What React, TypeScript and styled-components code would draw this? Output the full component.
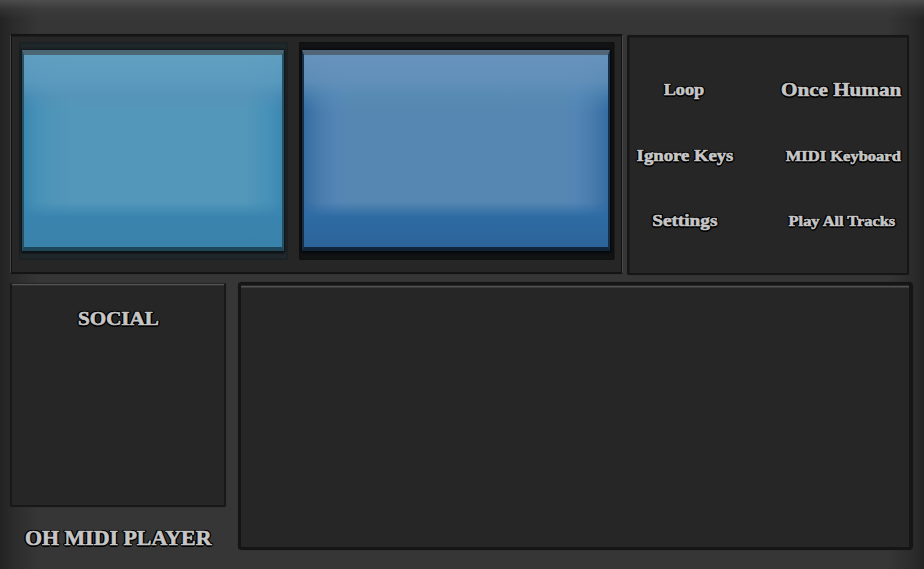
import React from "react";
import styled, { createGlobalStyle } from "styled-components";

const GlobalStyle = createGlobalStyle`
  * { box-sizing: border-box; }
  body { margin: 0; background: #353535; }
`;

const Shell = styled.main`
  width: 924px;
  height: 569px;
  padding: 34px 11px 0 10px;
  display: flex;
  flex-direction: column;
  gap: 8px;
  overflow: hidden;
  background:
    linear-gradient(180deg, rgba(82, 82, 82, 0.85) 0, rgba(64, 64, 64, 0.5) 9px, rgba(54, 54, 54, 0) 19px),
    linear-gradient(90deg, rgba(30, 30, 30, 0.8) 0, rgba(35, 35, 35, 0.6) 12px, rgba(48, 48, 48, 0) 38px),
    linear-gradient(270deg, rgba(30, 30, 30, 0.8) 0, rgba(35, 35, 35, 0.6) 10px, rgba(48, 48, 48, 0) 36px),
    #363636;
`;

const TopRow = styled.div`
  display: flex;
  height: 240px;
  gap: 4px;
`;

const BottomRow = styled.div`
  display: flex;
  height: 287px;
  gap: 12px;
`;

const ScreenPanel = styled.section`
  width: 613px;
  height: 240px;
  padding: 6px 8px 0;
  display: flex;
  gap: 11px;
  background: #262626;
  border: 2px solid #141414;
  border-left: 1px solid #464646;
  border-right: 1px solid #4b4b4b;
  border-radius: 2px;
  box-shadow: inset 1px 0 #111, inset -1px 0 #111, inset 0 1px #1c1c1c, 0 0 1px #202020;
`;

const Bezel = styled.div<{ $deep?: boolean }>`
  width: ${(p) => (p.$deep ? "315px" : "269px")};
  height: 218px;
  padding: 8px 4px 8px 3px;
  border-radius: 2px;
  background: ${(p) => (p.$deep ? "#121314" : "#20282b")};
  box-shadow: ${(p) =>
    p.$deep ? "inset 0 0 2px #0b0b0b, 1px 0 #1b1b1b" : "inset 0 0 2px 1px #1b1f20, 0 0 1px #252b2d"};
`;

const Glass = styled.div<{ $deep?: boolean }>`
  height: 201px;
  border-style: solid;
  border-width: 5px 2px 4px;
  border-color: ${(p) =>
    p.$deep ? "#526478 #152f49 #10243a #152f49" : "#4b6773 #285063 #1f4558 #285063"};
  box-shadow: 0 0 2px 1px ${(p) => (p.$deep ? "#05080b" : "#101719")}, 0 2px 2px #080c0e;
  background:
    linear-gradient(180deg,
      ${(p) => (p.$deep ? "rgba(104,148,189,.95)" : "rgba(99,160,193,.9)")} 0,
      ${(p) => (p.$deep ? "rgba(99,145,187,.85)" : "rgba(94,156,191,.8)")} 26px,
      rgba(90,145,183,0.35) 42px,
      rgba(90,145,183,0) 56px,
      rgba(57,130,175,0) 147px,
      ${(p) => (p.$deep ? "#2d6ba3" : "#3984af")} 162px,
      ${(p) => (p.$deep ? "#2c6499" : "#3982aa")} 100%),
    linear-gradient(90deg,
      ${(p) => (p.$deep ? "#356da3" : "#3c87b0")} 0,
      ${(p) => (p.$deep ? "#4a7dad 17px, #5385b6 32px, #5687b2 44px" : "#4690b7 12px, #4f95b9 28px, #5397ba 50px")},
      ${(p) => (p.$deep ? "#5687b2 calc(100% - 44px), #5385b6 calc(100% - 32px), #4a7dad calc(100% - 17px)" : "#5397ba calc(100% - 36px), #458fb7 calc(100% - 10px)")},
      ${(p) => (p.$deep ? "#356da3" : "#3c87b0")} 100%);
  background-origin: padding-box;
`;

const OptionsPanel = styled.section`
  width: 282px;
  height: 240px;
  margin-top: 1px;
  padding-top: 19px;
  background: #262626;
  border: 2px solid #161616;
  border-radius: 2px;
  box-shadow: 0 0 1px #202020, inset 1px 1px #1d1d1d;
  display: grid;
  grid-template-columns: 110px 132px;
  column-gap: 36px;
  grid-template-rows: repeat(3, 66px);
`;

const Option = styled.div<{ $shift?: number; $drop?: number }>`
  display: flex;
  align-items: center;
  justify-content: center;
  padding-left: ${(p) => p.$shift ?? 0}px;
  padding-top: ${(p) => p.$drop ?? 0}px;
`;

const Label = styled.span<{ $size: number; $stretch: number }>`
  display: inline-block;
  white-space: nowrap;
  font: bold ${(p) => p.$size}px/24px "Liberation Serif", serif;
  color: #c6c6c6;
  -webkit-text-stroke: 0.6px #c6c6c6;
  transform: scaleX(${(p) => p.$stretch});
  text-shadow:
    -1px -1px #000, 0 -1px #000, 1px -1px #000, -1px 0 #000, 1px 0 #000,
    -1px 1px #000, 0 1px #000, 1px 1px #000, 0 2px #000, 1.5px 0 #000,
    -1.5px 0 #000, 0 -1.5px #000, 0 0 2px #000;
`;

const Sidebar = styled.aside`
  width: 216px;
  padding-top: 1px;
  display: flex;
  flex-direction: column;
  align-items: center;
`;

const SocialPanel = styled.section`
  width: 216px;
  height: 224px;
  padding: 23px 0 0 1px;
  text-align: center;
  background: #262626;
  border: 2px solid #181818;
  border-top: 1px solid #252525;
  border-radius: 2px;
  box-shadow: inset 0 1px #555, inset 0 2px #303030, 0 0 1px #222;
`;

const Brand = styled.div`
  margin-top: 19px;
`;

const TrackPanel = styled.section`
  width: 675px;
  height: 268px;
  background: #262626;
  border: 3px solid #151515;
  border-right-width: 4px;
  border-radius: 4px;
  box-shadow: inset 0 1px #282828, inset 0 2px #505050, inset 0 3px #3b3b3b, 0 0 1px #1d1d1d;
`;

const options = [
  { text: "Loop", size: 17, stretch: 1.07, shift: 0, drop: 1 },
  { text: "Once Human", size: 19, stretch: 1.11, shift: 0, drop: 1 },
  { text: "Ignore Keys", size: 17, stretch: 1.1, shift: 1, drop: 2 },
  { text: "MIDI Keyboard", size: 15, stretch: 1.1, shift: 5, drop: 2 },
  { text: "Settings", size: 17, stretch: 1.13, shift: 1, drop: 0 },
  { text: "Play All Tracks", size: 15, stretch: 1.09, shift: 2, drop: 0 },
];

export default function App() {
  return (
    <>
      <GlobalStyle />
      <Shell>
        <TopRow>
          <ScreenPanel>
            <Bezel><Glass /></Bezel>
            <Bezel $deep><Glass $deep /></Bezel>
          </ScreenPanel>
          <OptionsPanel>
            {options.map((o) => (
              <Option key={o.text} $shift={o.shift} $drop={o.drop}>
                <Label $size={o.size} $stretch={o.stretch}>{o.text}</Label>
              </Option>
            ))}
          </OptionsPanel>
        </TopRow>
        <BottomRow>
          <Sidebar>
            <SocialPanel>
              <Label $size={19} $stretch={1.11}>SOCIAL</Label>
            </SocialPanel>
            <Brand>
              <Label $size={20} $stretch={1.095}>OH MIDI PLAYER</Label>
            </Brand>
          </Sidebar>
          <TrackPanel />
        </BottomRow>
      </Shell>
    </>
  );
}
